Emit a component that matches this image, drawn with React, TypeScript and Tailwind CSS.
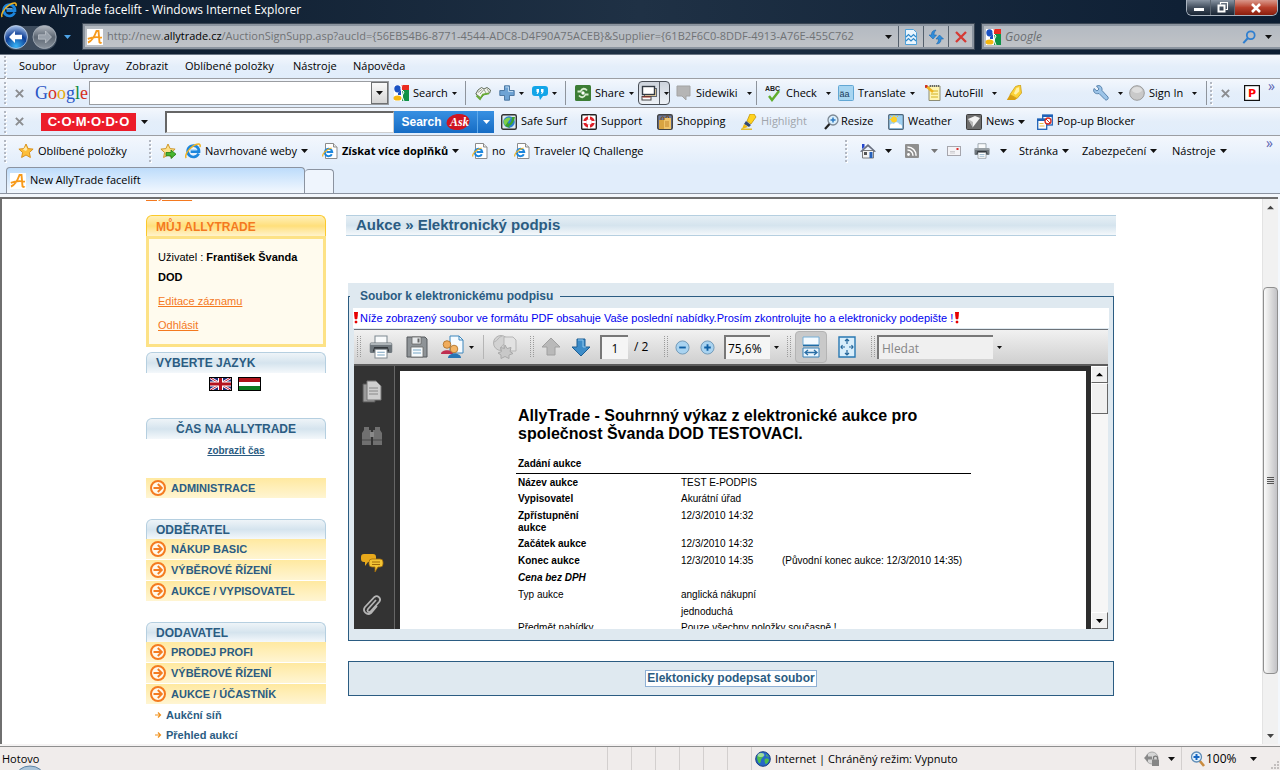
import type { ReactNode } from "react";

type Kids = { children?: ReactNode };

/* ---------- small drawing helpers ---------- */

function Icon({ children, size = 16, box = 16 }: Kids & { size?: number; box?: number }) {
  return (
    <svg width={size} height={size} viewBox={`0 0 ${box} ${box}`} className="shrink-0" aria-hidden="true">
      {children}
    </svg>
  );
}

function Caret({ small = false, color = "#111" }: { small?: boolean; color?: string }) {
  return (
    <svg width={small ? 5 : 7} height={small ? 3 : 4} viewBox="0 0 8 4" preserveAspectRatio="none" className="shrink-0" aria-hidden="true">
      <path d="M0 0h8L4 4z" fill={color} />
    </svg>
  );
}

function Grip() {
  return (
    <svg width="3" height="24" viewBox="0 0 3 24" className="shrink-0" aria-hidden="true">
      {[1, 5, 9, 13, 17, 21].map((y) => (
        <g key={y}>
          <rect x="1" y={y + 1} width="2" height="2" fill="#fff" />
          <rect x="0" y={y} width="2" height="2" fill="#b3b8c2" />
        </g>
      ))}
    </svg>
  );
}

const IEIcon = () => (
  <Icon>
    <path d="M13.6 10.4A5.7 5.7 0 1 1 14 8.6H5.6" fill="none" stroke="#1c86dd" strokeWidth="2.7" />
    <path d="M4.6 6.8h7" stroke="#9fd4fb" strokeWidth="1" />
    <path d="M1.2 15C-.6 12.6 3 6.6 8 3.2 12.5.2 16 .2 15 4" fill="none" stroke="#f0b323" strokeWidth="1.5" />
  </Icon>
);

const PageIE = () => (
  <Icon>
    <path d="M3.5.5h8l3.500 3.500v11.500H3.500z" fill="#fff" stroke="#8b8b8b" />
    <path d="M11.500.5V4H15" fill="#e8e8e8" stroke="#8b8b8b" />
    <path d="M9.800 11.200A3.700 3.700 0 1 1 10.200 9H4.500" fill="none" stroke="#1c86dd" strokeWidth="2" />
    <path d="M.8 13.500C0 11 4 6.500 9.500 5" fill="none" stroke="#f0b323" strokeWidth="1.200" />
  </Icon>
);

const AllyIcon = () => (
  <Icon>
    <rect width="16" height="16" fill="#fff" />
    <path d="M1 13.500c3-1 6.500-6 8.500-11.500h2l1 11.500c.6.800 1.500.4 2-.300M.8 9.800C5 8 10 7.800 15 8.600" fill="none" stroke="#f79a1c" strokeWidth="1.900" />
  </Icon>
);

const GoogleSquare = () => (
  <Icon>
    <rect x="1" y="0" width="15" height="16" fill="#fff" />
    <path d="M8 0h8v5H9z" fill="#ea2b1f" />
    <path d="M9 5h7v11H9l1-5z" fill="#0f9246" />
    <ellipse cx="4.500" cy="3.800" rx="3.200" ry="3.600" fill="#1a52c4" />
    <path d="M8 5v5H5V8z" fill="#1a52c4" />
    <ellipse cx="4.500" cy="13" rx="4" ry="2.600" fill="#f5b70f" />
    <path d="M9 0 8 4l3 3-2 4 2 5" fill="none" stroke="#fff" strokeWidth="1" />
  </Icon>
);

const StarPath = "M8 1l2.100 4.600 5 .5-3.700 3.400 1 5L8 12l-4.400 2.500 1-5L.9 6.100l5-.5z";

const Star = () => (
  <Icon>
    <path d={StarPath} fill="#fdbf3a" stroke="#d58a13" strokeWidth=".9" />
    <path d="M8 3l1.300 3.300L8 8 5 6.800z" fill="#ffe9a6" />
  </Icon>
);

const StarAdd = () => (
  <Icon>
    <path d={StarPath} fill="#fde08a" stroke="#c98f1c" strokeWidth=".9" />
    <path d="M6 9.500h5V7l5 4.200-5 4.300v-2.700H6z" fill="#48b52f" stroke="#1f7a12" strokeWidth=".8" />
  </Icon>
);

const NewsPic = () => (
  <Icon>
    <rect x=".5" y=".5" width="15" height="15" rx="1" fill="#6d6d6d" stroke="#3d3d3d" />
    <path d="M2 5l7-3 5 2-7 9z" fill="#f2f2f2" />
    <path d="M2 5l5 3v6z" fill="#b8b8b8" />
  </Icon>
);

const SafeSurf = () => (
  <Icon>
    <rect x=".7" y=".7" width="14.600" height="14.600" rx="1.500" fill="#dfe9ec" stroke="#333" strokeWidth="1.400" />
    <circle cx="8" cy="8" r="5.800" fill="#2b7fd3" />
    <path d="M3 6c3-3 5-3 7-2L7 8l-2 4C3 11 2 8 3 6z" fill="#7fd04b" />
    <path d="M14 3c-1 5-3 8-6 9l1 2-5-2 3-4 .6 2C10 9 11 6 11 3z" fill="#3aa32c" />
  </Icon>
);

const Support = () => (
  <Icon>
    <rect x=".7" y=".7" width="14.600" height="14.600" rx="1" fill="#fff" stroke="#222" strokeWidth="1.400" />
    <circle cx="8" cy="8" r="4.300" fill="none" stroke="#dd2027" strokeWidth="3" />
    <path d="M8 1.500v4M8 10.500v4M1.500 8h4M10.500 8h4" stroke="#fff" strokeWidth="2" />
  </Icon>
);

const Shopping = () => (
  <Icon>
    <rect x=".7" y=".7" width="14.600" height="14.600" rx="1.500" fill="#6d7ba0" stroke="#444" strokeWidth="1.400" />
    <path d="M2 6h7v9H2z" fill="#d9a441" />
    <path d="M7 4h7v11H7z" fill="#f0c46a" />
    <path d="M4 6V4c0-1.500 3-1.500 3 0v2M9 4V3c0-1.300 2.500-1.300 2.500 0v1" fill="none" stroke="#7b4d10" />
    <path d="M9 7v6M11 7v6" stroke="#c3862c" />
  </Icon>
);

const Marker = () => (
  <Icon>
    <path d="M9 0h4l2 3-5 7-4-3z" fill="#ffd21f" stroke="#b98c00" strokeWidth=".7" />
    <path d="M5 7l5 4-2 2-5-3z" fill="#32476e" />
    <path d="M3 10l4 3-6 2z" fill="#efb90c" />
    <path d="M0 15.200h11" stroke="#e3b100" strokeWidth="1.200" />
  </Icon>
);

const Resize = () => (
  <Icon>
    <circle cx="9" cy="6" r="5" fill="#d8eefc" stroke="#7d8894" strokeWidth="1.300" />
    <path d="M9 3.500v5M6.500 6h5" stroke="#2d79c1" strokeWidth="1.500" />
    <path d="M5.500 10L1 15" stroke="#222" strokeWidth="2.200" />
  </Icon>
);

const Weather = () => (
  <Icon>
    <rect x=".7" y=".7" width="14.600" height="14.600" rx="1" fill="#9fd0f1" stroke="#4d6478" strokeWidth="1.200" />
    <circle cx="6" cy="5.500" r="3" fill="#ffcf24" />
    <path d="M6 1v1.500M2 2l1 1M10 2L9 3M1.500 5.500H3" stroke="#ffcf24" />
    <path d="M2 12c0-3 3-3 4-2 1-2.500 5-2 5 .3 2-.6 3 1 3 2.200V14H2z" fill="#fff" />
  </Icon>
);

const Popup = () => (
  <Icon>
    <rect x="5.700" y="1" width="9.600" height="10" fill="#fff" stroke="#1e62b8" strokeWidth="1.300" />
    <path d="M5 2h11" stroke="#1e62b8" strokeWidth="2" />
    <rect x=".7" y="5" width="9" height="10.300" fill="#fff" stroke="#1e62b8" strokeWidth="1.300" />
    <path d="M0 6h10" stroke="#1e62b8" strokeWidth="2" />
    <path d="M2.500 9.500h4M2.500 12h5" stroke="#ebc04c" strokeWidth="1.200" />
    <circle cx="11" cy="7" r="3" fill="#fff" stroke="#d9281d" strokeWidth="1.300" />
    <path d="M9 5l4 4" stroke="#d9281d" />
  </Icon>
);

const Book = () => (
  <Icon>
    <path d="M.8 9L3 5l3.500-2.500L9 4l3-1.500L15.500 5l-.8 3L9 9.500 6 13z" fill="#f3f5ee" stroke="#5f6a58" strokeWidth="1" />
    <path d="M3 7.500l4-3.200M5 9l4-4.500 2 3.500M12 4l2 3" fill="none" stroke="#8d9683" strokeWidth=".9" />
    <path d="M1.500 10.500L5 14l3-4.500 6-1.200" fill="none" stroke="#67ab35" strokeWidth="1.800" />
  </Icon>
);

const Plus = () => (
  <Icon>
    <path d="M5.500.8h5v4.700h4.700v5h-4.700v4.700h-5v-4.700H.8v-5h4.700z" fill="#6ea3d4" stroke="#44709c" strokeWidth=".9" />
    <path d="M6.500 2h3v4.500H14" fill="none" stroke="#b8d6ef" />
  </Icon>
);

const Bubble = () => (
  <Icon>
    <path d="M3 1h10a3 3 0 0 1 3 3v4a3 3 0 0 1-3 3h-2l-3 4-1-4H3a3 3 0 0 1-3-3V4a3 3 0 0 1 3-3z" fill="#12a5e8" />
    <path d="M4.500 4H7v3L5.500 9H4.600l.8-2H4.500zM9 4h2.500v3L10 9h-.9l.8-2H9z" fill="#fff" />
  </Icon>
);

const Share = () => (
  <Icon>
    <rect width="16" height="16" rx="1.500" fill="#3c7d35" />
    <path d="M2.500 6.500h3C7 3 10 3 12 5.500M13.500 9.500h-3C9 13 6 13 4 10.500" fill="none" stroke="#d7ecd0" strokeWidth="1.800" />
    <circle cx="8" cy="8" r="1.700" fill="#fff" />
  </Icon>
);

const Windows = () => (
  <Icon>
    <rect x="3.500" y="3.500" width="12" height="8" fill="#f3d9a4" stroke="#5e6670" />
    <rect x="1.500" y="1.500" width="12" height="8" fill="#fff" stroke="#323a44" strokeWidth="1.400" />
    <rect x="1" y="11.500" width="9" height="3.500" fill="#fff" stroke="#444" />
    <path d="M1.500 12h8" stroke="#a02c20" />
  </Icon>
);

const Comment = () => (
  <Icon>
    <path d="M1 1h13v10h-4v4l-4-4H1z" fill="#b5b5b5" stroke="#a3a3a3" />
  </Icon>
);

const Abc = () => (
  <Icon size={17} box={17}>
    <text x="0" y="6" fontSize="7" fontWeight="700" fontFamily="Liberation Sans, sans-serif" fill="#222">ABC</text>
    <path d="M4 11l3 4 7-9" fill="none" stroke="#5fae2c" strokeWidth="2.400" />
  </Icon>
);

const Translate = () => (
  <Icon>
    <rect x=".5" y=".5" width="15" height="15" rx="1" fill="#a7d5f1" stroke="#62a7d4" />
    <text x="1.500" y="11.500" fontSize="9" fontFamily="Liberation Sans, sans-serif" fill="#173a58">äa</text>
  </Icon>
);

const AutoFill = () => (
  <Icon>
    <path d="M4 1h11v14.500H4z" fill="#fff5b4" stroke="#8d8d74" />
    <path d="M6 6h7M6 9h7M6 12h7" stroke="#d3b022" />
    <path d="M5 1h10" stroke="#666" strokeDasharray="1 1" strokeWidth="2" />
    <path d="M1 1l7 6" stroke="#efb321" strokeWidth="2.600" />
    <path d="M0 .5l2 1.600" stroke="#cb2f25" strokeWidth="3" />
  </Icon>
);

const Highlighter = () => (
  <Icon>
    <path d="M9.500 1.500L14.500 0 15.500 8l-4.500 5.500L4 9.500z" fill="#fcd238" stroke="#cc9e14" strokeWidth=".8" />
    <path d="M4 9.500l7 4-2 1.500H.8z" fill="#d99f12" />
    <path d="M10.500 3l2.500-.8.3 4-3.500 3.500-2-1.200z" fill="#fff1a8" />
  </Icon>
);

const Wrench = () => (
  <Icon>
    <path d="M1 3.500L4 6l2-2L3.500 1C7-.5 9.500 2 9 5.500l6 6.500c1 2-1.500 4-3 2.500L6 8.500C2.500 9.500-.5 7 1 3.500z" fill="#9cc4e8" stroke="#4e7ba6" strokeWidth=".9" />
  </Icon>
);

const GreyBall = () => (
  <Icon>
    <circle cx="8" cy="8" r="7.300" fill="#c9c9c9" stroke="#9b9b9b" />
    <ellipse cx="8" cy="5" rx="5" ry="3" fill="#dedede" />
  </Icon>
);

const PIcon = () => (
  <Icon>
    <rect x=".6" y=".6" width="14.800" height="14.800" fill="#fff" stroke="#111" strokeWidth="1.200" />
    <text x="4" y="12" fontSize="11" fontWeight="700" fontFamily="DejaVu Sans, sans-serif" fill="#f00">P</text>
  </Icon>
);

const Home = () => (
  <Icon>
    <path d="M2.500 7.500h11V15h-11z" fill="#f3f3f3" stroke="#7b7b7b" />
    <path d="M0 8.500L8 1l8 7.500-1.500.5L8 3.500 1.500 9z" fill="#6a7080" />
    <path d="M2 1h2.500v3L2 6z" fill="#2244cc" />
    <rect x="4" y="9" width="3" height="3" fill="#555" />
    <rect x="9.500" y="9" width="3" height="6" fill="#2560b9" />
  </Icon>
);

const Rss = () => (
  <Icon>
    <rect x="1" y="1" width="14" height="14" rx="1" fill="#8f8f8f" />
    <circle cx="4.500" cy="11.500" r="1.400" fill="#fff" />
    <path d="M3.500 7a5.500 5.500 0 0 1 5.500 5.800M3.500 4a8.500 8.500 0 0 1 8.600 8.800" fill="none" stroke="#fff" strokeWidth="1.500" />
  </Icon>
);

const Mail = () => (
  <Icon>
    <rect x="1.500" y="3.500" width="13" height="9" fill="#f3f3f6" stroke="#a6a6ad" />
    <rect x="10.500" y="5" width="2" height="2" fill="#e02b2b" />
    <path d="M4 8.500h5M4 10h5" stroke="#c3c3c8" strokeWidth=".8" />
  </Icon>
);

const Printer = ({ size = 16 }: { size?: number }) => (
  <Icon size={size}>
    <path d="M4 .7h8v5H4z" fill="#f8fafb" stroke="#7f8a92" strokeWidth=".7" />
    <rect x=".5" y="5" width="15" height="7" rx="1" fill="#6f777d" />
    <path d="M1 6h14" stroke="#c3cace" strokeWidth="1" />
    <path d="M3.500 8h9l1 3h-11z" fill="#33383c" />
    <path d="M4 9.500h8v5.800H4z" fill="#fff" stroke="#848c92" strokeWidth=".7" />
    <path d="M5.500 11.500h5M5.500 13.300h5" stroke="#7ba3c0" strokeWidth=".7" />
  </Icon>
);

/* ---------- shared bar parts ---------- */

function Tool({ children, className = "" }: Kids & { className?: string }) {
  return <button type="button" className={`flex h-full shrink-0 items-center gap-1 whitespace-nowrap ${className}`}>{children}</button>;
}

const barClass = "flex items-center border-b border-[#9c9ea3] pl-1 bg-linear-to-b from-[#f3f7fd] via-[#e4eefa] to-[#e1edfb]";

function Sep() {
  return <span className="h-6 w-px shrink-0 bg-[#8e949c]" />;
}

function CloseX() {
  return (
    <button type="button" aria-label="Zavřít panel" className="flex w-6 shrink-0 justify-center">
      <Icon size={9} box={10}>
        <path d="M1 1l8 8M9 1L1 9" stroke="#8b8d90" strokeWidth="2.200" />
      </Icon>
    </button>
  );
}

/* ---------- window chrome ---------- */

function TitleBar() {
  return (
    <header className="flex h-5 items-start pl-px">
      <div className="flex h-5 items-center gap-1 text-[12px] text-white">
        <IEIcon />
        <h1>New AllyTrade facelift - Windows Internet Explorer</h1>
      </div>
      <div className="mr-0.5 ml-auto flex h-4 overflow-hidden rounded-b-md border border-t-0 border-[#a9b3bf] text-white">
        <button type="button" aria-label="Minimalizovat" className="flex w-6 items-end justify-center border-r border-[#5c6672] bg-linear-to-b from-[#8994a2] via-[#434f5e] to-[#1a2635] pb-1">
          <span className="h-[3px] w-[10px] bg-white" />
        </button>
        <button type="button" aria-label="Obnovit" className="flex w-6 items-center justify-center border-r border-[#5c6672] bg-linear-to-b from-[#8994a2] via-[#434f5e] to-[#1a2635]">
          <Icon size={11} box={11}>
            <path d="M3.500 2.500v-2h7v7h-2" fill="none" stroke="#fff" strokeWidth="1.200" />
            <path d="M1.500 3.500h6v6h-6z" fill="none" stroke="#fff" strokeWidth="2" />
          </Icon>
        </button>
        <button type="button" aria-label="Zavřít" className="flex w-[42px] items-center justify-center bg-linear-to-b from-[#d9988c] via-[#b8402c] to-[#8a1d0c]">
          <Icon size={10} box={10}>
            <path d="M1 1l8 8M9 1L1 9" stroke="#fff" strokeWidth="2.600" />
          </Icon>
        </button>
      </div>
    </header>
  );
}

function NavBar() {
  return (
    <div className="flex h-[34px] items-center pb-px">
      <svg width="60" height="30" viewBox="0 0 60 30" className="ml-1 shrink-0" role="img" aria-label="Zpět a vpřed">
        <defs>
          <radialGradient id="back" cx=".5" cy=".9" r=".9">
            <stop offset="0" stopColor="#37b5f7" />
            <stop offset=".55" stopColor="#0f3f96" />
            <stop offset="1" stopColor="#a9c5ec" />
          </radialGradient>
          <linearGradient id="fwd" x1="0" y1="0" x2="0" y2="1">
            <stop offset="0" stopColor="#b4bac2" />
            <stop offset=".5" stopColor="#5d6773" />
            <stop offset="1" stopColor="#8b949e" />
          </linearGradient>
        </defs>
        <rect x="0" y="4" width="53" height="24" rx="12" fill="#6d7b8c" opacity=".5" />
        <circle cx="12" cy="15" r="11.500" fill="url(#back)" stroke="#c3d3e8" strokeWidth=".8" />
        <path d="M5 15l6-6v3.800h7v4.400h-7V21z" fill="#fff" />
        <circle cx="40.500" cy="15" r="11.500" fill="url(#fwd)" stroke="#a7b0ba" strokeWidth=".8" />
        <path d="M47.500 15l-6-6v3.800h-7v4.400h7V21z" fill="#99a1ab" stroke="#ccd1d7" strokeWidth=".6" />
      </svg>
      <Caret color="#4ea3e6" />
      <div className="ml-3 flex h-[25px] min-w-0 flex-1 items-center border-2 border-[#8b949f] bg-linear-to-b from-[#b4bac2] to-[#c0c3c7] pl-0.5 outline outline-[#3a4654]">
        <AllyIcon />
        <div className="ml-1 min-w-0 flex-1 overflow-hidden text-[11px] whitespace-nowrap text-[#6f7275]">
          http://new.<span className="text-black">allytrade.cz</span>/AuctionSignSupp.asp?aucId={"{"}56EB54B6-8771-4544-ADC8-D4F90A75ACEB{"}"}&amp;Supplier={"{"}61B2F6C0-8DDF-4913-A76E-455C762
        </div>
        <span className="flex w-5 justify-center"><Caret /></span>
        <Tool className="w-[25px] justify-center border-l border-[#55606c]">
          <Icon>
            <path d="M2.500.5h8l3 3v12h-11z" fill="#eaf5fd" stroke="#4fa0d8" />
            <path d="M3 8l2.500-2.500L8 8l2.500-2.500L13 8M3 12l2.500-2.500L8 12l2.500-2.500L13 12" fill="none" stroke="#3089cb" strokeWidth="1.200" />
          </Icon>
        </Tool>
        <Tool className="w-[25px] justify-center border-l border-[#55606c]">
          <Icon>
            <path d="M8 1C4.500 1.500 3.500 3 3.500 6H1l4 4 3.500-4H6C6 4 6.500 3 8 1z" fill="#2f8ddb" stroke="#1d66ad" strokeWidth=".6" />
            <path d="M8.500 15c3.500-.5 4.500-2 4.500-5h2.500l-4-4L8 10h2.500c0 2-.5 3-2 5z" fill="#2f8ddb" stroke="#1d66ad" strokeWidth=".6" />
          </Icon>
        </Tool>
        <Tool className="w-6 justify-center border-l border-[#55606c]">
          <Icon size={12} box={12}>
            <path d="M1 1l10 10M11 1L1 11" stroke="#d63a34" strokeWidth="2.300" />
          </Icon>
        </Tool>
      </div>
      <div className="ml-2 flex h-[25px] w-[298px] items-center border-2 border-r-0 border-[#8b949f] bg-linear-to-b from-[#b4bac2] to-[#c0c3c7] pl-px outline outline-[#3a4654]">
        <GoogleSquare />
        <input aria-label="Hledat na webu" placeholder="Google" className="ml-1 min-w-0 flex-1 bg-transparent text-[12px] italic outline-none placeholder:text-[#6b6e71]" />
        <Icon size={14}>
          <circle cx="10" cy="6" r="4.500" fill="none" stroke="#2f7fd0" strokeWidth="2" />
          <path d="M6.500 9.500L1.500 15" stroke="#2f7fd0" strokeWidth="2.400" />
        </Icon>
        <span className="flex w-6 justify-center"><Caret /></span>
      </div>
    </div>
  );
}

function MenuBar() {
  return (
    <nav className={`${barClass} h-6`}>
      <Grip />
      <a href="#soubor" className="ml-3 w-[54px]">Soubor</a>
      <a href="#upravy" className="w-[53px]">Úpravy</a>
      <a href="#zobrazit" className="w-[59px]">Zobrazit</a>
      <a href="#oblibene" className="w-[108px]">Oblíbené položky</a>
      <a href="#nastroje" className="w-[60px]">Nástroje</a>
      <a href="#napoveda">Nápověda</a>
    </nav>
  );
}

function GoogleBar() {
  return (
    <div className={`${barClass} h-[29px]`}>
      <Grip />
      <CloseX />
      <span className="ml-1 w-[54px] shrink-0 font-[Liberation_Serif,serif] text-[18px] leading-none">
        <span className="text-[#2a56c6]">G</span><span className="text-[#d62d20]">o</span><span className="text-[#e8a90c]">o</span><span className="text-[#2a56c6]">g</span><span className="text-[#128a3c]">l</span><span className="text-[#d62d20]">e</span>
      </span>
      <div className="flex h-6 w-[300px] shrink-0 border border-[#9a9da1] bg-white">
        <input aria-label="Google hledání" className="min-w-0 flex-1 px-1 outline-none" />
        <button type="button" aria-label="Historie" className="flex w-[17px] items-center justify-center border border-[#6f7173] bg-linear-to-b from-[#fafafa] to-[#d5d5d5]"><Caret /></button>
      </div>
      <Tool className="ml-1 w-[72px]"><GoogleSquare />Search<Caret small /></Tool>
      <Sep />
      <Tool className="ml-[9px] w-6"><Book /></Tool>
      <Tool className="w-[33px]"><Plus /><Caret small /></Tool>
      <Tool className="w-[33px]"><Bubble /><Caret small /></Tool>
      <Sep />
      <Tool className="ml-[9px] w-[63px]"><Share />Share<Caret small /></Tool>
      <button type="button" aria-label="Okna" className="flex h-6 w-8 shrink-0 items-center gap-0.5 rounded-sm border border-[#4a4f57] bg-linear-to-b from-[#cdd3dc] to-[#eef2f7] pl-0.5">
        <Windows /><span className="h-full w-px bg-[#5c626b]" /><span className="w-px" /><Caret small />
      </button>
      <Tool className="ml-[6px] w-20"><Comment />Sidewiki<span className="w-px" /><Caret small /></Tool>
      <Sep />
      <Tool className="ml-2 w-[73px]"><Abc />Check<span className="w-px" /><Caret small /></Tool>
      <Tool className="w-[87px]"><Translate />Translate<Caret small /></Tool>
      <Tool className="w-[81px]"><AutoFill />AutoFill<span className="w-px" /><Caret small /></Tool>
      <Tool><Highlighter /></Tool>
      <Tool className="ml-auto w-9"><Wrench /><span className="w-px" /><Caret small /></Tool>
      <Tool className="w-[77px]"><GreyBall />Sign In<span className="w-px" /><Caret small /></Tool>
      <Sep />
      <span className="w-[3px]" />
      <Grip />
      <CloseX />
      <span className="w-[7px]" />
      <PIcon />
      <span className="w-5 self-start pl-2 text-[14px] leading-none text-[#5b62b0]">»</span>
    </div>
  );
}

function ComodoBar() {
  return (
    <div className={`${barClass} h-7`}>
      <Grip />
      <CloseX />
      <span className="ml-[10px] flex h-[18px] w-[95px] shrink-0 items-center justify-center bg-[#ec1c2a] font-[Liberation_Sans,sans-serif] text-[13px] font-bold text-white">C·O·M·O·D·O</span>
      <span className="flex w-[29px] shrink-0 pl-[5px]"><Caret /></span>
      <input aria-label="Ask hledání" className="h-[22px] w-[229px] shrink-0 border border-t-2 border-l-2 border-[#cfcfcf] border-t-[#666] border-l-[#666] bg-white px-1 outline-none" />
      <button type="button" className="flex h-[22px] w-[83px] shrink-0 items-center justify-center gap-1 bg-linear-to-b from-[#3790e2] to-[#156cc4] font-[Liberation_Sans,sans-serif] text-[12px] font-bold text-white">
        Search
        <svg width="24" height="18" viewBox="0 0 24 18" aria-hidden="true">
          <ellipse cx="12" cy="9" rx="11.500" ry="8" fill="#cf1520" transform="rotate(-8 12 9)" />
          <text x="4" y="13" fontSize="12" fontStyle="italic" fontWeight="700" fontFamily="Liberation Serif, serif" fill="#fff">Ask</text>
        </svg>
      </button>
      <button type="button" aria-label="Možnosti hledání" className="mr-[7px] flex h-[22px] w-[17px] shrink-0 items-center justify-center border-l border-[#5ea9ea] bg-linear-to-b from-[#3790e2] to-[#156cc4]"><Caret color="#fff" /></button>
      <Tool className="w-20"><SafeSurf />Safe Surf</Tool>
      <Tool className="w-[76px]"><Support />Support</Tool>
      <Tool className="w-[84px]"><Shopping />Shopping</Tool>
      <Tool className="w-[83px] text-[#a0a5ab]"><Marker />Highlight</Tool>
      <Tool className="w-16 gap-[1px]"><Resize />Resize</Tool>
      <Tool className="w-[78px]"><Weather />Weather</Tool>
      <Tool className="w-[71px]"><NewsPic />News<Caret /></Tool>
      <Tool><Popup />Pop-up Blocker</Tool>
    </div>
  );
}

function FavoritesBar() {
  return (
    <div className="flex h-[30px] items-center bg-linear-to-b from-[#f3f7fd] to-[#e1edfb] pl-1">
      <Grip />
      <Tool className="ml-[11px] w-[131px]"><Star />Oblíbené položky</Tool>
      <Grip />
      <Tool className="ml-2 w-[25px]"><StarAdd /></Tool>
      <Tool className="w-[137px]"><IEIcon />Navrhované weby<Caret /></Tool>
      <Tool className="w-[150px] font-bold"><PageIE />Získat více doplňků<Caret /></Tool>
      <Tool className="w-[42px]"><PageIE />no</Tool>
      <Tool><PageIE />Traveler IQ Challenge</Tool>
      <span className="ml-auto" />
      <Grip />
      <Tool className="ml-3 w-11 gap-[9px]"><Home /><Caret /></Tool>
      <Tool className="w-[42px] gap-[11px]"><Rss /><Caret color="#777" /></Tool>
      <Tool className="w-7"><Mail /></Tool>
      <Tool className="w-[45px] gap-[10px]"><Printer /><Caret /></Tool>
      <Tool className="w-[63px]">Stránka<Caret /></Tool>
      <Tool className="w-[90px]">Zabezpečení<Caret /></Tool>
      <Tool className="w-[94px]">Nástroje<Caret /></Tool>
      <span className="w-[14px] self-start text-[14px] leading-none text-[#5b62b0]">»</span>
    </div>
  );
}

function TabBar() {
  return (
    <div className="flex h-7 items-end border-b border-[#8b93a0] bg-[#e1edfb] pl-1.5">
      <button type="button" className="flex h-[26px] w-[299px] items-center gap-1 rounded-t-sm border border-b-0 border-[#8b93a0] bg-linear-to-b from-[#bddcfb] to-[#f3f8fe] pl-[3px]">
        <AllyIcon />
        New AllyTrade facelift
      </button>
      <button type="button" aria-label="Nová karta" className="h-6 w-[29px] rounded-t-sm border border-b-0 border-l-0 border-[#8b93a0] bg-[#eff5fd]" />
    </div>
  );
}

/* ---------- page sidebar ---------- */

function BlueHead({ children, center = false, short = false }: Kids & { center?: boolean; short?: boolean }) {
  return (
    <h2
      className={`rounded-t-md border border-b-0 border-[#b5cfe0] bg-linear-to-b from-[#eef4f8] via-[#d5e4ee] to-[#f4f8fb] px-[9px] text-[12px] leading-5 font-bold text-[#2b5c82] ${center ? "text-center" : ""} ${short ? "h-5" : "h-[21px]"}`}
    >
      {children}
    </h2>
  );
}

function MenuItem({ children }: Kids) {
  return (
    <li>
      <a href="#menu" className="mb-px flex h-5 items-center gap-[5px] bg-linear-to-b from-[#ffe9a0] to-[#fff5d2] pl-1 text-[11px] font-bold text-[#2b5c82]">
        <Icon>
          <circle cx="8" cy="8" r="7" fill="#fff8ea" stroke="#f47b20" strokeWidth="2" />
          <path d="M3.500 8h8M7.800 4l4 4-4 4" fill="none" stroke="#f47b20" strokeWidth="1.900" />
        </Icon>
        {children}
      </a>
    </li>
  );
}

function SubItem({ children }: Kids) {
  return (
    <li>
      <a href="#sub" className="flex h-5 items-center gap-1 pl-2 text-[11px] font-bold text-[#2b5c82]">
        <Icon size={8} box={8}>
          <path d="M1 4h5M4 1.500L6.500 4 4 6.500" fill="none" stroke="#f0921e" strokeWidth="1.200" />
        </Icon>
        {children}
      </a>
    </li>
  );
}

function Sidebar() {
  return (
    <aside className="w-[180px] shrink-0">
      <h2 className="h-[21px] rounded-t-md border border-b-0 border-[#fbc92b] bg-linear-to-b from-[#fff0b8] via-[#ffdf7a] to-[#fff3cc] px-[9px] text-[12px] leading-[22px] font-bold text-[#f4791f]">MŮJ ALLYTRADE</h2>
      <div className="h-[111px] border-[3px] border-[#fde286] bg-[#fffbee] px-[9px] pt-2 text-[11px] leading-5">
        <p>Uživatel : <b>František Švanda DOD</b></p>
        <p className="mt-1"><a href="#edit" className="text-[#f4791f] underline">Editace záznamu</a></p>
        <p className="mt-1"><a href="#logout" className="text-[#f4791f] underline">Odhlásit</a></p>
      </div>
      <div className="mt-[5px]"><BlueHead>VYBERTE JAZYK</BlueHead></div>
      <div className="mt-1 flex h-[14px] justify-center gap-1.5 pr-0.5">
        <svg width="23" height="14" viewBox="0 0 23 14" role="img" aria-label="English">
          <rect width="23" height="14" fill="#1e2a7a" />
          <path d="M0 0l23 14M23 0L0 14" stroke="#fff" strokeWidth="2.600" />
          <path d="M0 0l23 14M23 0L0 14" stroke="#c4122f" strokeWidth="1" />
          <path d="M11.500 0v14M0 7h23" stroke="#fff" strokeWidth="5" />
          <path d="M11.500 0v14M0 7h23" stroke="#b5121f" strokeWidth="3" />
          <rect x=".5" y=".5" width="22" height="13" fill="none" stroke="#000" />
        </svg>
        <svg width="23" height="14" viewBox="0 0 23 14" role="img" aria-label="Magyar">
          <rect width="23" height="14" fill="#fff" />
          <rect width="23" height="5" fill="#b01218" />
          <rect y="9" width="23" height="5" fill="#0d7a1f" />
          <rect x=".5" y=".5" width="22" height="13" fill="none" stroke="#000" />
        </svg>
      </div>
      <div className="mt-[27px]"><BlueHead center>ČAS NA ALLYTRADE</BlueHead></div>
      <p className="mt-1 text-center text-[10px] leading-4 font-bold text-[#2b5c82]"><a href="#cas" className="underline">zobrazit čas</a></p>
      <ul className="mt-[19px]"><MenuItem>ADMINISTRACE</MenuItem></ul>
      <div className="mt-[21px]"><BlueHead short>ODBĚRATEL</BlueHead></div>
      <ul>
        <MenuItem>NÁKUP BASIC</MenuItem>
        <MenuItem>VÝBĚROVÉ ŘÍZENÍ</MenuItem>
        <MenuItem>AUKCE / VYPISOVATEL</MenuItem>
      </ul>
      <div className="mt-[21px]"><BlueHead short>DODAVATEL</BlueHead></div>
      <ul>
        <MenuItem>PRODEJ PROFI</MenuItem>
        <MenuItem>VÝBĚROVÉ ŘÍZENÍ</MenuItem>
        <MenuItem>AUKCE / ÚČASTNÍK</MenuItem>
        <SubItem>Aukční síň</SubItem>
        <SubItem>Přehled aukcí</SubItem>
      </ul>
    </aside>
  );
}

/* ---------- PDF viewer ---------- */

function DotGrip() {
  return (
    <svg width="4" height="22" viewBox="0 0 4 22" className="shrink-0" aria-hidden="true">
      <path d="M.5 0v22M3.500 0v22" stroke="#9b9b9b" strokeDasharray="1 1" />
    </svg>
  );
}

function PdfToolbar() {
  return (
    <div className="flex h-[37px] items-center border-t border-b-2 border-t-[#6d7278] border-b-[#5c5c5c] bg-linear-to-b from-[#f1f1f1] to-[#cfcfcf] pl-[3px] font-['Open_Sans',sans-serif] text-[12px]">
      <DotGrip />
      <Tool className="ml-2 w-9"><Printer size={24} /></Tool>
      <Tool className="w-9">
        <Icon size={24} box={24}>
          <path d="M2 2h18l2 2v18H2z" fill="#8e9397" stroke="#55595c" />
          <path d="M7 2h9v7H7z" fill="#e6e9eb" stroke="#666" strokeWidth=".8" />
          <path d="M12.500 3.500h2v4h-2z" fill="#666" />
          <path d="M6 12h12v10H6z" fill="#f6fafc" stroke="#666" strokeWidth=".8" />
          <path d="M8 15h8M8 18h8" stroke="#77a6c6" />
        </Icon>
      </Tool>
      <Tool className="w-[42px]">
        <Icon size={24} box={24}>
          <path d="M9 1h9l4 4v13H9z" fill="#f5fbff" stroke="#3d86bc" />
          <path d="M18 1v4h4" fill="none" stroke="#3d86bc" />
          <circle cx="6" cy="9.500" r="3.800" fill="#f0ac5c" stroke="#a86b22" strokeWidth=".8" />
          <path d="M0 19c0-5 12-5 12 0z" fill="#bf2e50" />
          <circle cx="13" cy="14" r="3.800" fill="#f3b566" stroke="#a86b22" strokeWidth=".8" />
          <path d="M7 23c0-6 13-6 13 0z" fill="#2876b5" />
        </Icon>
        <Caret small />
      </Tool>
      <span className="mr-2 h-6 w-px bg-[#b5b5b5]" />
      <Tool className="w-[38px]">
        <Icon size={26} box={26}>
          <circle cx="9" cy="9" r="7.500" fill="#d2d2d2" stroke="#b1b1b1" />
          <path d="M2 8c4-1 4-5 8-6M9 16c-1-5 4-6 7-8" fill="none" stroke="#b5b5b5" />
          <path d="M12 3h9l3 3v11H12z" fill="#e2e2e2" stroke="#b5b5b5" />
          <path d="M13 11l2 3.500 4-1-1 4 3 2-4 1.500v3.500l-4-2-4 2V21l-3-2 3.500-1.500-1-4 4 1z" fill="#c8c8c8" stroke="#a9a9a9" />
        </Icon>
      </Tool>
      <DotGrip />
      <Tool className="ml-[7px] w-[30px]">
        <Icon size={20} box={20}>
          <path d="M10 1l9 9h-5v8H6v-8H1z" fill="#b9b9b9" stroke="#a0a0a0" />
        </Icon>
      </Tool>
      <Tool className="w-[29px]">
        <Icon size={20} box={20}>
          <path d="M10 19l9-9h-5V2H6v8H1z" fill="#3d8cc8" stroke="#1d5e94" />
          <path d="M7 3h5v7h3" fill="none" stroke="#8fc6ec" />
        </Icon>
      </Tool>
      <input aria-label="Stránka" defaultValue="1" className="h-6 w-7 shrink-0 border-t-2 border-l-2 border-[#777] bg-[#f5f5f5] text-center outline-none" />
      <span className="w-9 pl-1.5">/ 2</span>
      <DotGrip />
      <Tool className="ml-[7px] w-[25px]">
        <Icon size={15}>
          <circle cx="8" cy="8" r="7" fill="#a9d3f0" stroke="#6f97b5" />
          <path d="M4.500 8h7" stroke="#0e5fa4" strokeWidth="2" />
        </Icon>
      </Tool>
      <Tool className="w-6">
        <Icon size={15}>
          <circle cx="8" cy="8" r="7" fill="#a9d3f0" stroke="#6f97b5" />
          <path d="M4.500 8h7M8 4.500v7" stroke="#0e5fa4" strokeWidth="2" />
        </Icon>
      </Tool>
      <input aria-label="Přiblížení" defaultValue="75,6%" className="mr-1 h-6 w-[46px] shrink-0 border-t-2 border-l-2 border-[#777] bg-[#f5f5f5] pl-0.5 outline-none" />
      <Caret small />
      <span className="w-2" />
      <DotGrip />
      <button type="button" aria-label="Na šířku" className="ml-1 flex h-8 w-8 shrink-0 items-center justify-center rounded border border-[#b4b4b4] bg-[#c9c9c9]">
        <Icon size={22} box={22}>
          <path d="M3 1h16v8H3z" fill="#f3faff" stroke="#74aed6" />
          <path d="M3 9.500h16" stroke="#1f6ca6" strokeWidth="1.500" />
          <path d="M3 12h16v9H3z" fill="#e9f5fd" stroke="#3a84ba" />
          <path d="M5 16.500h12M8 14l-3 2.500L8 19M14 14l3 2.500-3 2.500" fill="none" stroke="#2b6fa6" strokeWidth="1.300" />
        </Icon>
      </button>
      <button type="button" aria-label="Celá stránka" className="mx-1 flex w-8 shrink-0 items-center justify-center">
        <Icon size={22} box={22}>
          <path d="M3 1h16v20H3z" fill="#d9eefb" stroke="#2878b2" strokeWidth="1.400" />
          <path d="M11 3v5M9 5l2-2 2 2M11 19v-5M9 17l2 2 2-2M5 11h4M6.500 9L5 11l1.500 2M17 11h-4M15.500 9l1.500 2-1.500 2" fill="none" stroke="#25679b" strokeWidth="1.200" />
        </Icon>
      </button>
      <span className="w-1" />
      <DotGrip />
      <input aria-label="Hledat v dokumentu" placeholder="Hledat" className="mr-1 ml-0.5 h-6 w-[116px] shrink-0 border-t-2 border-l-2 border-[#777] bg-[#f0f0f0] pl-[3px] outline-none placeholder:text-[#858585]" />
      <Caret small />
    </div>
  );
}

const rows: { label: string; value?: string; extra?: string; style?: string; height: string }[] = [
  { label: "Název aukce", value: "TEST E-PODPIS", style: "font-bold", height: "h-[17px]" },
  { label: "Vypisovatel", value: "Akurátní úřad", style: "font-bold", height: "h-[17px]" },
  { label: "Zpřístupnění aukce", value: "12/3/2010 14:32", style: "font-bold", height: "h-7" },
  { label: "Začátek aukce", value: "12/3/2010 14:32", style: "font-bold", height: "h-[17px]" },
  { label: "Konec aukce", value: "12/3/2010 14:35", extra: "(Původní konec aukce: 12/3/2010 14:35)", style: "font-bold", height: "h-[17px]" },
  { label: "Cena bez DPH", style: "font-bold italic", height: "h-[17px]" },
  { label: "Typ aukce", value: "anglická nákupní", height: "h-[17px]" },
  { label: "", value: "jednoduchá", height: "h-4" },
  { label: "Předmět nabídky", value: "Pouze všechny položky současně !", height: "h-[17px]" },
];

function PdfDocument() {
  return (
    <article className="mt-[5px] min-w-0 flex-1 bg-white pt-9 pl-[118px] text-black">
      <h2 className="text-[16px] leading-[18px] font-bold">
        AllyTrade - Souhrnný výkaz z elektronické aukce pro<br />společnost Švanda DOD TESTOVACI.
      </h2>
      <table className="mt-[13px] -ml-0.5 w-[455px] table-fixed text-left text-[10px] leading-3">
        <colgroup>
          <col className="w-[165px]" />
          <col className="w-[101px]" />
          <col />
        </colgroup>
        <thead>
          <tr className="h-[17px] border-b border-black"><th colSpan={3} className="p-0 pl-0.5">Zadání aukce</th></tr>
        </thead>
        <tbody>
          {rows.map((r) => (
            <tr key={r.label + r.value} className={r.height}>
              <td className={`p-0 pt-[3px] pr-20 pl-0.5 align-top ${r.style ?? "whitespace-nowrap"} ${r.height === "h-7" ? "" : "whitespace-nowrap"}`}>{r.label}</td>
              <td className="p-0 pt-[3px] align-top whitespace-nowrap">{r.value}</td>
              <td className="p-0 pt-[3px] align-top whitespace-nowrap">{r.extra}</td>
            </tr>
          ))}
        </tbody>
      </table>
    </article>
  );
}

const winBtn = "flex h-[17px] items-center justify-center border border-t-white border-l-white border-r-[#666] border-b-[#666] bg-[#f0f0f0]";

function PdfViewer() {
  return (
    <div className="mx-[5px]">
      <PdfToolbar />
      <div className="flex h-[263px] overflow-hidden bg-[#2d2d2d]">
        <nav className="flex w-[46px] shrink-0 flex-col">
          <div className="flex h-full w-[41px] flex-col items-center border-r border-[#666] bg-[#333] pt-[14px] pr-1 pb-3">
            <Icon size={24} box={24}>
              <path d="M3 4h12v18H3z" fill="#9a9a9a" stroke="#555" />
              <path d="M7 1h9l5 5v14H7z" fill="#cfcfcf" stroke="#777" />
              <path d="M9 8h9M9 11h9M9 14h9" stroke="#888" />
            </Icon>
            <span className="h-5" />
            <Icon size={24} box={24}>
              <path d="M4 3h5v3h2v15H2V9l2-3zM15 3h5v3l2 3v12h-9V6h2z" fill="#707070" />
              <path d="M2 16h9M13 16h9" stroke="#484848" />
              <path d="M10 8h4v5h-4z" fill="#898989" />
            </Icon>
            <span className="flex-1" />
            <Icon size={24} box={24}>
              <path d="M4 3h9q3 0 3 3v2q0 3-3 3H8l-3 4v-4H4q-3 0-3-3V6q0-3 3-3z" fill="#e8a91b" />
              <path d="M12 8h8q3 0 3 3v2q0 3-3 3h-2l-3 5v-5h-3q-3 0-3-3v-2q0-3 3-3z" fill="#f3c434" stroke="#a26c0a" strokeWidth=".8" />
              <path d="M12 11h8M12 13.500h8" stroke="#a26c0a" />
            </Icon>
            <span className="h-[18px]" />
            <Icon size={24} box={24}>
              <path d="M16 7l-8 9c-1.500 2 .5 4 2.500 2.500l9-10c2-3-2-7-5-4.500L5 14c-3 4 2 9 6 6l6-7" fill="none" stroke="#b5b5b5" strokeWidth="1.800" />
            </Icon>
          </div>
        </nav>
        <PdfDocument />
        <span className="w-[5px] shrink-0" />
        <div className="flex w-[17px] shrink-0 flex-col bg-[#f6f6f6]">
          <span className={winBtn}><Icon size={7} box={8}><path d="M0 6h8L4 2z" /></Icon></span>
          <span className="h-[31px] border border-t-white border-l-white border-r-[#666] border-b-[#666] bg-[#f0f0f0]" />
          <span className={`${winBtn} mt-auto`}><Caret color="#000" /></span>
        </div>
      </div>
    </div>
  );
}

const Bang = () => (
  <svg width="4" height="12" viewBox="0 0 4 12" className="shrink-0" aria-hidden="true">
    <path d="M0 0h4L3 7H1zM1 9h2v2H1z" fill="#e60000" stroke="#e60000" strokeWidth=".5" />
  </svg>
);

function Main() {
  return (
    <main className="min-w-0 flex-1">
      <h1 className="h-[21px] border-y border-[#b5cfe0] bg-linear-to-b from-[#e6eff5] via-[#d5e4ee] to-[#f4f8fb] pl-2.5 text-[15px] leading-[18px] font-bold text-[#2b5c82]">Aukce » Elektronický podpis</h1>
      <div className="mx-0.5 mt-[47px] bg-[#dfe9f0] pt-0.5">
        <fieldset className="min-w-0 border border-[#2b5c82] pb-[11px]">
          <legend className="ml-px pr-[7px] pl-[10px] text-[12px] leading-[22px] font-bold text-[#2b5c82]">Soubor k elektronickému podpisu</legend>
          <p className="mx-1 mt-px mb-px flex h-5 items-center gap-0.5 bg-white pl-px text-[11px] text-[#0000f0]">
            <Bang />
            Níže zobrazený soubor ve formátu PDF obsahuje Vaše poslední nabídky.Prosím zkontrolujte ho a elektronicky podepište !
            <Bang />
          </p>
          <PdfViewer />
        </fieldset>
      </div>
      <div className="mx-0.5 mt-5 flex h-[35px] items-center justify-center border border-[#2b5c82] bg-[#dfe9f0]">
        <button type="button" className="h-[17px] border border-[#8fb0d4] bg-white px-px text-[12px] leading-[15px] font-bold text-[#2b5c82]">Elektonicky podepsat soubor</button>
      </div>
    </main>
  );
}

/* ---------- page frame and status bar ---------- */

function PageScrollbar() {
  return (
    <div className="flex w-4 shrink-0 flex-col items-center border-l border-[#e3e3e3] bg-[#f1f1f1]">
      <span className="flex h-4 items-center"><Icon size={7} box={8}><path d="M0 6h8L4 2z" fill="#444" /></Icon></span>
      <span className="flex-[72_1_0%]" />
      <span className="flex w-full flex-[387_1_0%] flex-col items-center justify-center gap-px rounded-sm border border-[#8f8f8f] bg-linear-to-r from-[#fafafa] via-[#dedede] to-[#c2c2c6]">
        {[0, 1, 2, 3].map((n) => <span key={n} className="h-px w-[7px] bg-[#555]" />)}
      </span>
      <span className="flex-[54_1_0%]" />
      <span className="flex h-4 items-center"><Caret color="#444" /></span>
    </div>
  );
}

function StatusBar() {
  return (
    <footer className="flex h-6 shrink-0 items-stretch overflow-hidden border-t border-[#8f8f8f] bg-[#f0eceb] leading-6">
      <div className="relative flex-1 pl-0.5">
        Hotovo
        <svg width="28" height="6" viewBox="0 0 28 6" className="absolute bottom-0 left-4" aria-hidden="true">
          <ellipse cx="14" cy="13" rx="14" ry="11" fill="#a9c3d8" stroke="#5d85a8" />
        </svg>
      </div>
      {[0, 1, 2, 3, 4, 5].map((n) => <span key={n} className="w-6 border-l border-[#d3cfce]" />)}
      <div className="flex w-[384px] items-center gap-1 border-l border-[#d3cfce] pl-[3px]">
        <Icon>
          <circle cx="8" cy="8" r="7.300" fill="#2769c8" stroke="#173f82" />
          <path d="M3 4c2-3 6-2 6 0S6 7 6 9s-1 4-2 3-3-6-1-8zM10 8c2-1 4 0 4 1s-2 4-3 4-2-4-1-5zM11 3l3 3-3-1z" fill="#4fc04a" />
          <ellipse cx="6" cy="4" rx="3.500" ry="2" fill="#fff" opacity=".45" />
        </Icon>
        Internet | Chráněný režim: Vypnuto
      </div>
      <div className="flex w-[46px] items-center gap-2 border-l border-[#d3cfce] pl-2">
        <Icon>
          <circle cx="8" cy="7" r="6" fill="#d6d6d6" stroke="#aaa" />
          <path d="M0 7l4-4v2.500h4v3H4V11z" fill="#888" />
          <rect x="8" y="8.500" width="7" height="6.500" fill="#868686" />
          <path d="M9.500 8.500V7c0-2.500 4-2.500 4 0v1.500" fill="none" stroke="#777" strokeWidth="1.300" />
        </Icon>
        <Caret />
      </div>
      <div className="flex w-[99px] items-center border-l border-[#d3cfce] pl-2">
        <Icon>
          <path d="M9 9l5 6" stroke="#c98b3e" strokeWidth="2.600" />
          <circle cx="6.500" cy="6" r="5" fill="#e4f2fc" stroke="#5f8db7" strokeWidth="1.300" />
          <path d="M6.500 3v6M3.500 6h6" stroke="#1766c2" strokeWidth="2" />
        </Icon>
        <span className="w-[44px] text-[12px]">100%</span>
        <Caret />
        <svg width="9" height="9" viewBox="0 0 9 9" className="mt-auto ml-auto" aria-hidden="true">
          <path d="M6 0h2v2H6zM3 3h2v2H3zM6 3h2v2H6zM0 6h2v2H0zM3 6h2v2H3zM6 6h2v2H6z" fill="#c3bfbe" />
        </svg>
      </div>
    </footer>
  );
}

export default function App() {
  return (
    <div className="flex h-screen flex-col overflow-hidden bg-[#f3f7fc] font-['Open_Sans',sans-serif] text-[11px] text-black">
      <div className="shrink-0 border-b border-[#6c7785] bg-linear-to-r from-[#0b1a2c] via-[#1f3145] to-[#0c1d32]">
        <TitleBar />
        <NavBar />
      </div>
      <div className="shrink-0">
        <MenuBar />
        <GoogleBar />
        <ComodoBar />
        <FavoritesBar />
        <TabBar />
      </div>
      <div className="mt-[3px] mr-0.5 flex min-h-0 flex-1 border-t-2 border-l-2 border-[#6f6f6f] bg-white">
        <div className="min-w-0 flex-1 overflow-hidden pr-0.5 font-[Liberation_Sans,sans-serif]">
          <div className="mx-auto w-[970px]">
            <div className="flex h-4 items-start">
              <p className="-mt-[10px] text-[11px] leading-3"><a href="#home" className="text-[#f4791f] underline">AllyTrade</a></p>
            </div>
            <div className="flex gap-5">
              <Sidebar />
              <Main />
            </div>
          </div>
        </div>
        <PageScrollbar />
      </div>
      <div className="h-[2px] shrink-0 bg-[#f5f3f3]" />
      <StatusBar />
    </div>
  );
}
